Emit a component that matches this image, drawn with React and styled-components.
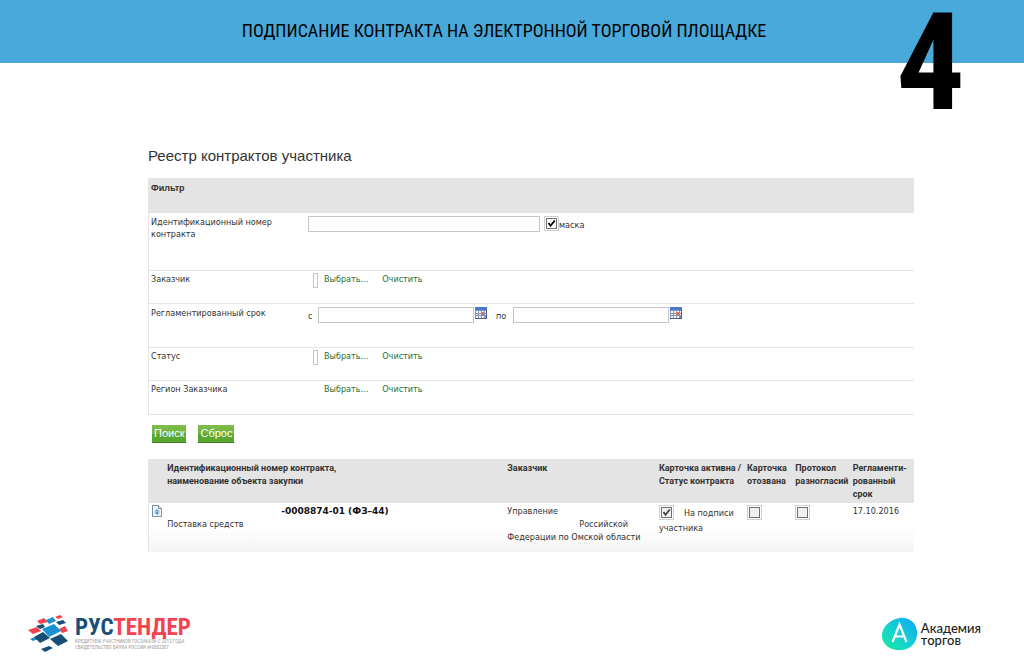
import React from 'react';
import styled, { createGlobalStyle } from 'styled-components';

const BLUE = '#48a9da';
const GRAY = '#e4e4e4';
const LINE = '#e6e6e6';
const GREEN = '#1d7038';
const TEXT = '#333333';

const GlobalStyle = createGlobalStyle`
  * {
    box-sizing: border-box;
  }

  body {
    margin: 0;
    background: #ffffff;
    color: ${TEXT};
    font-family: "DejaVu Sans Condensed", "DejaVu Sans", Verdana, sans-serif;
    font-size: 9px;
    line-height: 12px;
  }
`;

const Page = styled.div`
  display: flex;
  flex-direction: column;
  min-height: 100vh;
`;

const Header = styled.header`
  position: relative;
  display: flex;
  justify-content: center;
  align-items: center;
  height: 63px;
  padding: 0 16px 2px 0;
  background: ${BLUE};
`;

const Title = styled.h1`
  margin: 0;
  color: #000000;
  font-family: "Roboto Condensed", "Liberation Sans Narrow", sans-serif;
  font-size: 18px;
  font-weight: 400;
  line-height: 24px;
  white-space: nowrap;
`;

const SlideNumber = styled.span`
  position: absolute;
  top: 0;
  right: 59px;
  color: #000000;
  font-family: "Roboto Condensed", "Liberation Sans Narrow", sans-serif;
  font-size: 136px;
  font-weight: 700;
  line-height: 126px;
`;

const Main = styled.main`
  flex: 1;
  padding: 82px 110px 0 148px;
`;

const Heading = styled.h2`
  margin: 0 0 12px;
  font-family: "Liberation Sans", Arial, sans-serif;
  font-size: 15px;
  font-weight: 400;
  line-height: 21px;
`;

const FilterTitle = styled.h3`
  height: 35px;
  margin: 0;
  padding: 4px 3px;
  background: ${GRAY};
  font-family: "Liberation Sans", Arial, sans-serif;
  font-size: 9px;
  font-weight: 700;
  line-height: 12px;
`;

const Row = styled.div`
  display: grid;
  grid-template-columns: 157px 1fr;
  min-height: ${({ $height }) => $height}px;
  padding: ${({ $compact }) => ($compact ? 2 : 3)}px 0 0 2px;
  border-left: 1px solid ${LINE};
  border-bottom: 1px solid ${LINE};
`;

const RowLabel = styled.label`
  max-width: 130px;
`;

const Controls = styled.div`
  display: flex;
  align-items: flex-start;
`;

const TextInput = styled.input`
  width: ${({ $width }) => $width}px;
  height: 16px;
  padding: 0 2px;
  border: 1px solid #c4c4c4;
  background: #ffffff;
  font: inherit;
`;

const Word = styled.label`
  width: ${({ $width }) => $width}px;
  padding-top: 3px;
`;

const Picker = styled.div`
  display: flex;
  align-items: flex-start;
  gap: 14px;
  padding-left: 5px;
`;

const Slot = styled.span`
  width: 5px;
  height: 15px;
  margin-right: -8px;
  border: 1px solid ${({ $empty }) => ($empty ? 'transparent' : '#c4c4c4')};
`;

const Action = styled.a`
  color: ${GREEN};
  text-decoration: none;
`;

const IconButton = styled.button`
  width: 12px;
  height: 12px;
  margin: 0 9px 0 1px;
  padding: 0;
  border: 0;
  background: none;

  svg {
    display: block;
  }
`;

const Buttons = styled.div`
  display: flex;
  gap: 12px;
  padding: 10px 4px 16px;
`;

const Button = styled.button`
  height: 18px;
  padding: 0 2px;
  border: 0;
  border-bottom: 1px solid #3d7a20;
  background: linear-gradient(#7fbd4c, #6fb53c 50%, #58a22b 51%, #5ba92f);
  color: #ffffff;
  font-family: "Liberation Sans", Arial, sans-serif;
  font-size: 11px;
  line-height: 17px;
`;

const CheckFrame = styled.span`
  display: inline-grid;
  width: 15px;
  height: 15px;
  border: 1px solid #d0d0d0;
  vertical-align: top;

  input,
  svg {
    grid-area: 1 / 1;
    width: 11px;
    height: 11px;
    margin: 1px;
  }

  input {
    appearance: none;
    border: 1px solid #707070;
    background: ${({ $muted }) => ($muted ? '#f0f0f0' : '#ffffff')};
  }

  svg {
    pointer-events: none;
    visibility: hidden;
  }

  input:checked + svg {
    visibility: visible;
  }
`;

const Table = styled.table`
  width: 100%;
  border-collapse: separate;
  border-spacing: 0;
  table-layout: fixed;

  th,
  td {
    padding: 0;
    text-align: left;
    vertical-align: top;
  }

  th {
    height: 44px;
    padding-top: 3px;
    background: ${GRAY};
    font-family: Roboto, "Liberation Sans", sans-serif;
    font-size: 9px;
    line-height: 13px;
    white-space: nowrap;
  }

  td {
    height: 49px;
    padding-top: 2px;
    line-height: 13px;
  }

  tbody tr {
    background: linear-gradient(#ffffff 50%, #f4f4f4);
  }
`;

const IconCell = styled.td`
  border-left: 1px solid ${LINE};

  svg {
    display: block;
    margin-left: 3px;
  }
`;

const Contract = styled.strong`
  display: block;
  padding-left: 114px;
  color: #111111;
  font-family: "DejaVu Sans", Verdana, sans-serif;
`;

const Indented = styled.span`
  display: block;
  padding-left: 72px;
`;

const StatusText = styled.span`
  padding-left: 10px;
  line-height: 17px;
`;

const Footer = styled.footer`
  display: flex;
  justify-content: space-between;
  align-items: center;
  padding: 0 43px 20px 28px;
`;

const Logo = styled.div`
  display: flex;
  align-items: center;
  gap: ${({ $gap }) => $gap}px;
`;

const Brand = styled.div`
  color: #174f78;
  font-family: "Roboto Condensed", "DejaVu Sans Condensed", sans-serif;
  font-size: 23px;
  font-weight: 700;
  line-height: 21px;

  span {
    color: #f4434f;
  }
`;

const BrandNote = styled.div`
  color: #a0a0a0;
  font-family: "Roboto Condensed", "Liberation Sans", sans-serif;
  font-size: 5px;
  line-height: 6px;
  white-space: nowrap;
`;

const Academy = styled.div`
  color: #222222;
  font-family: Lato, sans-serif;
  font-size: 13px;
  font-weight: 500;
  line-height: 12px;
`;

const Checkbox = ({ muted, ...props }) => (
  <CheckFrame $muted={muted}>
    <input type="checkbox" {...props} />
    <svg viewBox="0 0 11 11" fill="none" stroke={muted ? '#444' : '#000'} strokeWidth="1.8">
      <path d="M2.5 5 4.5 7.8 8.8 2.5" />
    </svg>
  </CheckFrame>
);

const CalendarIcon = () => (
  <svg width="12" height="12" viewBox="0 0 12 12">
    <rect width="12" height="12" fill="#8295b8" />
    <rect width="12" height="3" fill="#4a78c8" />
    <path
      d="M1 4h2v2H1zM4 4h2v2H4zM7 4h2v1H7zM10 4h1v2h-1zM1 7h2v1H1zM4 7h2v1H4zM10 7h1v1h-1zM1 9h2v2H1zM4 9h2v2H4zM7 9h2v2H7z"
      fill="#f4f7fc"
    />
    <rect x="6" y="5" width="3" height="3" fill="#e0705c" />
    <path d="M0 11.5h12M11.5 3v9" stroke="#4d5c88" />
  </svg>
);

const DocumentIcon = () => (
  <svg width="10" height="12" viewBox="0 0 10 12">
    <path d="M.5.5h6l3 3v8h-9z" fill="#f2f7fb" stroke="#7d8f9f" />
    <path d="M6.5.5v3h3" fill="#d5e2ec" stroke="#7d8f9f" />
    <circle cx="5" cy="7" r="2.8" fill="#a9d0ee" />
    <path d="M5 4.8v1M5 6.4v2.8" stroke="#2c6ca5" strokeWidth="1.2" />
  </svg>
);

const TenderMark = () => (
  <svg width="40" height="37" viewBox="0 0 40 37">
    <g fill="#f4434f">
      <path d="M9 6 16 3 20 7 12 9z" />
      <path d="M27 2 32 0 35 2 30 4z" />
      <path d="M0 15 9 12 13 16 5 19z" />
      <path d="M31 14 37 11 40 16 34 18z" />
    </g>
    <g fill="#1b91cf">
      <path d="M18 5 25 2 28 6 21 9z" />
      <path d="M14 14 26 9 33 16 21 22z" />
      <path d="M2 24 7 22 10 24 5 26z" />
    </g>
    <g fill="#174f78">
      <path d="M8 11 15 9 17 12 12 14z" />
      <path d="M28 7 35 5 38 8 31 10z" />
      <path d="M6 22 15 17 22 23 12 28z" />
      <path d="M22 24 33 19 40 26 30 31z" />
      <path d="M13 34 21 31 25 33 17 37z" />
    </g>
  </svg>
);

const AcademyMark = () => (
  <svg width="35" height="34" viewBox="0 0 35 34">
    <defs>
      <linearGradient id="academy" x1="0" y1="1" x2="1" y2="0">
        <stop offset="0" stopColor="#19ec9c" />
        <stop offset="0.5" stopColor="#14cfd4" />
        <stop offset="1" stopColor="#10a4f4" />
      </linearGradient>
    </defs>
    <path
      d="M18 1C26 0 34 5 35 14 36 24 30 32 20 33 10 34 1 29 0 20-1 11 8 2 18 1z"
      fill="url(#academy)"
    />
    <path d="M10.5 25 17.5 7.5 24.5 25M13 19.5H22" fill="none" stroke="#fff" strokeWidth="2.2" />
  </svg>
);

const PickerRow = ({ label, height, empty }) => (
  <Row $height={height} $compact>
    <RowLabel as="span">{label}</RowLabel>
    <Picker>
      <Slot $empty={empty} />
      <Action href="#select">Выбрать...</Action>
      <Action href="#clear">Очистить</Action>
    </Picker>
  </Row>
);

const App = () => (
  <Page>
    <GlobalStyle />
    <Header>
      <Title>ПОДПИСАНИЕ КОНТРАКТА НА ЭЛЕКТРОННОЙ ТОРГОВОЙ ПЛОЩАДКЕ</Title>
      <SlideNumber>4</SlideNumber>
    </Header>

    <Main>
      <Heading>Реестр контрактов участника</Heading>
      <form>
        <FilterTitle>Фильтр</FilterTitle>
        <Row $height={58}>
          <RowLabel htmlFor="number">Идентификационный номер контракта</RowLabel>
          <Controls>
            <TextInput id="number" $width={232} />
            <Word as="span" $width={4} />
            <Checkbox id="mask" defaultChecked />
            <Word htmlFor="mask" $width={40}>маска</Word>
          </Controls>
        </Row>
        <PickerRow label="Заказчик" height={33} />
        <Row $height={44}>
          <RowLabel as="span">Регламентированный срок</RowLabel>
          <Controls>
            <Word htmlFor="from" $width={10}>с</Word>
            <TextInput id="from" $width={156} />
            <IconButton type="button" aria-label="с">
              <CalendarIcon />
            </IconButton>
            <Word htmlFor="to" $width={17}>по</Word>
            <TextInput id="to" $width={156} />
            <IconButton type="button" aria-label="по">
              <CalendarIcon />
            </IconButton>
          </Controls>
        </Row>
        <PickerRow label="Статус" height={33} />
        <PickerRow label="Регион Заказчика" height={34} empty />
        <Buttons>
          <Button type="button">Поиск</Button>
          <Button type="reset">Сброс</Button>
        </Buttons>
      </form>

      <Table>
        <colgroup>
          <col width="2.5%" />
          <col width="44.4%" />
          <col width="19.8%" />
          <col width="11.5%" />
          <col width="6.3%" />
          <col width="7.5%" />
          <col width="8%" />
        </colgroup>
        <thead>
          <tr>
            <th aria-label="Карточка" />
            <th>
              Идентификационный номер контракта,
              <br />
              наименование объекта закупки
            </th>
            <th>Заказчик</th>
            <th>
              Карточка активна /
              <br />
              Статус контракта
            </th>
            <th>
              Карточка
              <br />
              отозвана
            </th>
            <th>
              Протокол
              <br />
              разногласий
            </th>
            <th>
              Регламенти-
              <br />
              рованный
              <br />
              срок
            </th>
          </tr>
        </thead>
        <tbody>
          <tr>
            <IconCell>
              <DocumentIcon />
            </IconCell>
            <td>
              <Contract>-0008874-01 (ФЗ–44)</Contract>
              Поставка средств
            </td>
            <td>
              Управление
              <Indented>Российской</Indented>
              Федерации по Омской области
            </td>
            <td>
              <Checkbox muted defaultChecked aria-label="Карточка активна" />
              <StatusText>На подписи</StatusText>
              <br />
              участника
            </td>
            <td>
              <Checkbox muted aria-label="Карточка отозвана" />
            </td>
            <td>
              <Checkbox muted aria-label="Протокол разногласий" />
            </td>
            <td>17.10.2016</td>
          </tr>
        </tbody>
      </Table>
    </Main>

    <Footer>
      <Logo $gap={7}>
        <TenderMark />
        <div>
          <Brand>
            РУС
            <span>ТЕНДЕР</span>
          </Brand>
          <BrandNote>
            КРЕДИТУЕМ УЧАСТНИКОВ ГОСЗАКАЗА С 2012 ГОДА
            <br />
            СВИДЕТЕЛЬСТВО БАНКА РОССИИ №0002307
          </BrandNote>
        </div>
      </Logo>
      <Logo $gap={4}>
        <AcademyMark />
        <Academy>
          Академия
          <br />
          торгов
        </Academy>
      </Logo>
    </Footer>
  </Page>
);

export default App;
